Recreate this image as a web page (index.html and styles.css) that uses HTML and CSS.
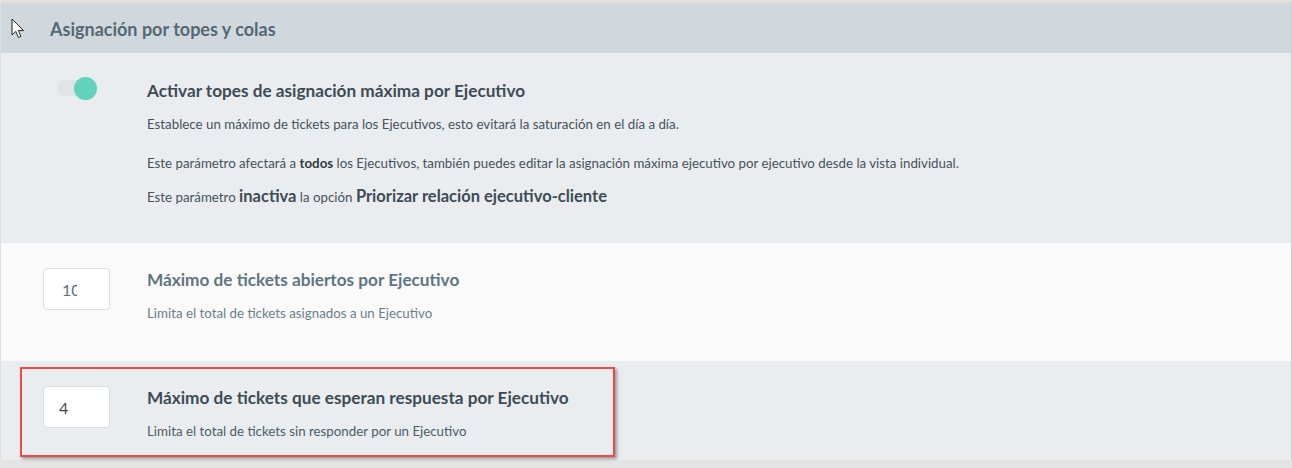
FILE: index.html
```html
<html><head>
<title>Asignación por topes y colas</title>
<link rel="stylesheet" href="styles.css">
</head>
<body>
<div class="panel">
	<div class="head">Asignación por topes y colas</div>
	<div class="row row-main">
		<div class="ctrl"><span class="toggle"><span class="knob"></span></span></div>
		<div class="info">
			<h2>Activar topes de asignación máxima por Ejecutivo</h2>
			<p class="p1">Establece un máximo de tickets para los Ejecutivos, esto evitará la saturación en el día a día.</p>
			<p class="p2">Este parámetro afectará a <b>todos</b> los Ejecutivos, también puedes editar la asignación máxima ejecutivo por ejecutivo desde la vista individual.</p>
			<p class="p3">Este parámetro <b class="big">inactiva</b> la opción <b class="big">Priorizar relación ejecutivo-cliente</b></p>
		</div>
	</div>
	<div class="row row-open">
		<div class="ctrl"><input class="num num-10" type="text" value="10"></div>
		<div class="info">
			<h3 class="muted">Máximo de tickets abiertos por Ejecutivo</h3>
			<p class="sub muted">Limita el total de tickets asignados a un Ejecutivo</p>
		</div>
	</div>
	<div class="row row-wait">
		<div class="ctrl"><input class="num" type="text" value="4"></div>
		<div class="info">
			<h3>Máximo de tickets que esperan respuesta por Ejecutivo</h3>
			<p class="sub">Limita el total de tickets sin responder por un Ejecutivo</p>
		</div>
		<div class="mark"></div>
	</div>
</div>
<svg class="cursor" width="15" height="21" viewBox="0 0 15 21"><path d="M1 1 L1 17 L4.8 13.4 L7.4 19.5 L9.9 18.4 L7.4 12.6 L12.6 12.6 Z" fill="#fff" stroke="#222" stroke-width="1" stroke-linejoin="round"/></svg>
</body></html>
```
FILE: styles.css
```css
body{margin:0;background-color:#e4e4e4;font-family:Lato,"Noto Sans",sans-serif;position:relative;height:468px;overflow:hidden;}
.panel{width:1290px;border-top:2px solid #dedede;border-right:1px solid #c9cdd0;border-left:1px solid #dde1e4;margin-top:1px;}
.head{height:50px;line-height:52px;background-color:#d0d8de;color:#566874;font-size:18px;font-weight:700;padding-left:49px;}
.row{display:flex;padding-left:42px;}
.ctrl{width:104px;flex:none;}
.info{flex:1;}
.row-main{background-color:#e9edf0;height:190px;}
.row-open{background-color:#fafafa;height:118px;}
.row-wait{background-color:#e9edf0;height:99px;position:relative;}
.toggle{display:block;width:40px;height:16px;border-radius:8px;background-color:#e1e3e5;margin:27px 0 0 14px;position:relative;}
.knob{position:absolute;right:0;top:-3px;width:23px;height:23px;border-radius:50%;background-color:#62d2bc;}
h2{font-size:17.2px;line-height:22px;margin:27px 0 0;color:#3e4b54;font-weight:700;}
p{margin:0;font-size:13.3px;line-height:18px;color:#46525b;}
.p1{margin-top:13px;}
.p2{margin-top:21px;}
.p3{margin-top:13px;line-height:22px;}
.big{font-size:16.5px;color:#3e4b54;}
b{font-weight:700;color:#2f3a42;}
.num{display:block;box-sizing:border-box;width:67px;height:42px;margin-top:25px;border:1px solid #dcdcdc;border-radius:4px;background-color:#fff;font-family:Lato,sans-serif;font-size:16px;color:#3e4b54;padding:0 0 0 15px;outline:none;}
.num-10{padding:0 32px 0 18px;color:#5b6f7c;}
h3{font-size:17.2px;line-height:22px;margin:26px 0 0;color:#3e4b54;font-weight:700;}
.sub{margin-top:13px;color:#4f5c65;}
.muted{color:#5f7582;}
.sub.muted{color:#6a7e8a;}
.mark{position:absolute;left:19px;top:6px;width:591px;height:86px;border:2px solid #f04747;box-shadow:2px 2px 3px rgba(0,0,0,0.35);}
.cursor{position:absolute;left:11px;top:18px;}
```
